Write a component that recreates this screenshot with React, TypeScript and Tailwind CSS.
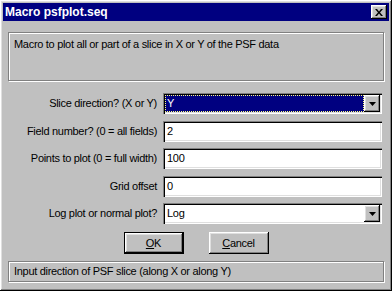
import React from "react";

const raised =
  "shadow-[inset_-1px_-1px_0_#000,inset_1px_1px_0_#fff,inset_-2px_-2px_0_#808080,inset_2px_2px_0_#dfdfdf]";
const sunken =
  "shadow-[inset_1px_1px_0_#808080,inset_2px_2px_0_#000,inset_-1px_-1px_0_#fff,inset_-2px_-2px_0_#dfdfdf]";
const etched = "border border-[#808080] shadow-[1px_1px_0_#fff,inset_1px_1px_0_#fff]";

function Arrow() {
  return (
    <svg width="7" height="4" viewBox="0 0 7 4">
      <path d="M0 0h7L3.5 4z" fill="#000" />
    </svg>
  );
}

function DropButton() {
  return (
    <div className={`flex h-full w-[16px] shrink-0 items-center justify-center bg-[#c0c0c0] ${raised}`}>
      <Arrow />
    </div>
  );
}

function Field({ value }: { value: string }) {
  return (
    <div className={`flex h-[21px] items-center bg-white pl-[4px] ${sunken}`}>{value}</div>
  );
}

const rows: { label: string; value: string; kind: "focus" | "text" | "combo" }[] = [
  { label: "Slice direction? (X or Y)", value: "Y", kind: "focus" },
  { label: "Field number? (0 = all fields)", value: "2", kind: "text" },
  { label: "Points to plot (0 = full width)", value: "100", kind: "text" },
  { label: "Grid offset", value: "0", kind: "text" },
  { label: "Log plot or normal plot?", value: "Log", kind: "combo" },
];

export default function App() {
  return (
    <div
      className={`flex h-[291px] w-[392px] flex-col bg-[#c0c0c0] p-[3px] text-[11px] leading-none tracking-[-0.3px] text-black font-['Liberation_Sans',Arial,sans-serif] ${raised}`}
    >
      {/* title bar */}
      <div className="flex h-[18px] items-center justify-between bg-[#000080] pl-[2px] pr-[2px]">
        <span className="text-[12px] font-bold tracking-[0px] text-white">Macro psfplot.seq</span>
        <div className={`flex h-[14px] w-[16px] items-center justify-center bg-[#c0c0c0] ${raised}`}>
          <svg width="8" height="7" viewBox="0 0 8 7">
            <path d="M0 0h2l2 2.5L6 0h2L5 3.5 8 7H6L4 4.5 2 7H0l3-3.5z" fill="#000" />
          </svg>
        </div>
      </div>

      <div className="mt-[11px] px-[5px]">
        <div className={`h-[49px] px-[5px] pt-[6px] ${etched}`}>
          Macro to plot all or part of a slice in X or Y of the PSF data
        </div>
      </div>

      {/* form */}
      <div className="mt-[12px] grid grid-cols-[149px_219px] gap-x-[6px] gap-y-[6.5px] px-[5px]">
        {rows.map((r) => (
          <React.Fragment key={r.label}>
            <div className="flex items-center justify-end whitespace-nowrap">{r.label}</div>
            {r.kind === "text" ? (
              <Field value={r.value} />
            ) : (
              <div className={`flex h-[21px] items-stretch bg-white p-[2px] ${sunken}`}>
                {r.kind === "focus" ? (
                  <div className="flex flex-1 items-center bg-[#000080] pl-[2px] text-white outline-1 -outline-offset-1 outline-dotted outline-[#ffff80]">
                    {r.value}
                  </div>
                ) : (
                  <div className="flex flex-1 items-center pl-[2px]">{r.value}</div>
                )}
                <DropButton />
              </div>
            )}
          </React.Fragment>
        ))}
      </div>

      {/* buttons */}
      <div className="mt-[8px] flex justify-center gap-[25px]">
        <div className="h-[22px] w-[60px] border border-black">
          <div className={`flex h-full w-full items-center justify-center ${raised}`}>
            <span>
              <span className="underline">O</span>K
            </span>
          </div>
        </div>
        <div className={`flex h-[22px] w-[60px] items-center justify-center ${raised}`}>
          <span>
            <span className="underline">C</span>ancel
          </span>
        </div>
      </div>

      <div className="mt-[7px] px-[5px]">
        <div className={`flex h-[21px] items-center px-[5px] ${etched}`}>
          Input direction of PSF slice (along X or along Y)
        </div>
      </div>
    </div>
  );
}
